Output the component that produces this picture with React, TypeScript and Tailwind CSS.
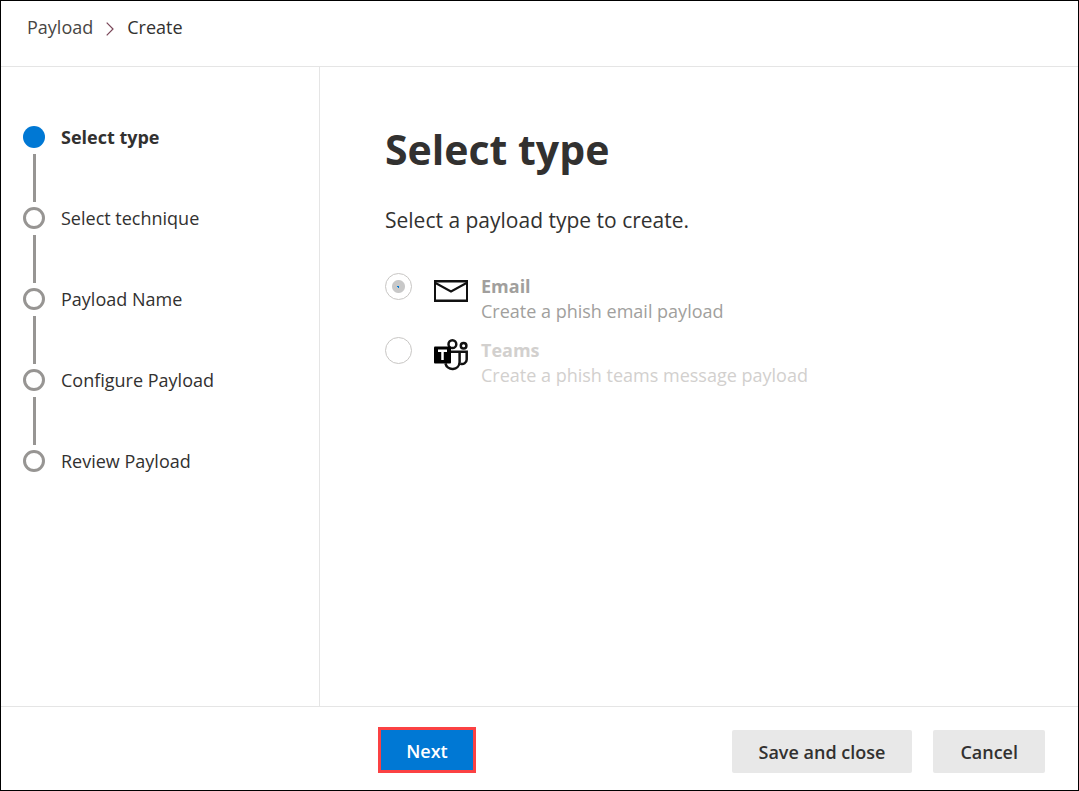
import React from 'react';

const steps = ['Select type', 'Select technique', 'Payload Name', 'Configure Payload', 'Review Payload'];

function MailIcon() {
  return (
    <svg viewBox="0 0 34 22" className="h-[22px] w-[34px]" fill="none" stroke="#111" aria-hidden="true">
      <rect x="1" y="1" width="32" height="20" strokeWidth="2" />
      <path d="M0 1.2h34M0 20.8h34" strokeWidth="2.4" />
      <path d="M1.5 3 17 11.5 32.5 3" strokeWidth="2" />
    </svg>
  );
}

function TeamsIcon() {
  return (
    <svg viewBox="0 0 34 32" className="h-8 w-[34px]" fill="none" stroke="#111" strokeWidth="2.5" aria-hidden="true">
      <circle cx="18.4" cy="5.2" r="3.9" />
      <circle cx="29.6" cy="6.8" r="2.8" />
      <path d="M16 12.8h16.7v7.6a4.6 4.6 0 0 1-6.4 4.2" />
      <path d="M25.6 12.8v10.4a7.2 7.2 0 0 1-14.2 1.2" />
      <rect x="0" y="7.4" width="17" height="17" rx="1" fill="#000" stroke="none" />
      <path d="M4 11.7h9M8.5 11.7v9.2" stroke="#fff" strokeWidth="2.5" />
    </svg>
  );
}

interface PayloadOptionProps {
  id: string;
  title: string;
  description: string;
  icon: React.ReactNode;
  tone: string;
  selected?: boolean;
}

function PayloadOption({ id, title, description, icon, tone, selected = false }: PayloadOptionProps) {
  return (
    <div className="flex items-start">
      <input
        type="radio"
        id={id}
        name="payload-type"
        disabled
        defaultChecked={selected}
        className="h-[27px] w-[27px] shrink-0 appearance-none rounded-full border border-[#c8c6c4] bg-white checked:bg-[radial-gradient(circle,#0078d4_0,#0078d4_1px,#c8c8c8_1px,#c8c8c8_6px,transparent_7px)]"
      />
      <label htmlFor={id} className={`ml-[22px] flex gap-[13px] pt-px text-lg leading-[25px] ${tone}`}>
        <span className="flex h-[34px] w-[34px] shrink-0 items-center">{icon}</span>
        <span>
          <span className="block font-bold">{title}</span>
          <span className="block">{description}</span>
        </span>
      </label>
    </div>
  );
}

export default function App() {
  return (
    <div className="flex min-h-screen flex-col border border-black bg-white font-['Open_Sans','Noto_Sans',sans-serif] text-lg text-[#323130]">
      <header className="border-b border-[#e5e5e5] px-[26px] pt-3 pb-[25px]">
        <nav aria-label="Breadcrumb" className="flex items-center gap-[13px] leading-7">
          <a href="#payload" className="text-[#484644]">Payload</a>
          <svg viewBox="0 0 8 14" className="mt-[3px] h-[14px] w-2" fill="none" stroke="#7a4658" strokeWidth="1.2" aria-hidden="true">
            <path d="m.7.7 6.3 6.3-6.3 6.3" />
          </svg>
          <a href="#create" aria-current="page">Create</a>
        </nav>
      </header>

      <div className="flex flex-1">
        <aside className="w-[319px] shrink-0 border-r border-[#e5e5e5] px-[22px] pt-[59px]">
          <ol>
            {steps.map((step, index) => (
              <li key={step} className="flex gap-4">
                <span className="flex w-[22px] shrink-0 flex-col items-center">
                  <span
                    className={
                      index === 0
                        ? 'h-[22px] w-[22px] rounded-full bg-[#0078d4]'
                        : 'h-[22px] w-[22px] rounded-full border-3 border-[#979593]'
                    }
                  />
                  {index < steps.length - 1 && <span className="mt-[6px] mb-[5px] h-12 w-[3px] bg-[#979593]" />}
                </span>
                <span className={index === 0 ? 'leading-[22px] font-bold' : 'leading-[22px]'}>{step}</span>
              </li>
            ))}
          </ol>
        </aside>

        <main className="flex-1 px-[65px] pt-[54px]">
          <h1 className="text-[41px] leading-[56px] font-bold">Select type</h1>
          <p className="mt-[29px] text-[21px] leading-7">Select a payload type to create.</p>
          <div role="radiogroup" aria-label="Payload type" className="mt-[39px] flex flex-col gap-[13px]">
            <PayloadOption
              id="email"
              title="Email"
              description="Create a phish email payload"
              icon={<MailIcon />}
              tone="text-[#a19f9d]"
              selected
            />
            <PayloadOption
              id="teams"
              title="Teams"
              description="Create a phish teams message payload"
              icon={<TeamsIcon />}
              tone="text-[#d2d0ce]"
            />
          </div>
        </main>
      </div>

      <footer className="flex items-end justify-between border-t border-[#e5e5e5] pt-5 pr-[33px] pb-[17px] pl-[377px] font-semibold">
        <button type="button" className="h-[46px] w-[98px] border-3 border-[#fb4143] bg-[#0078d4] pt-px text-white">
          Next
        </button>
        <div className="flex gap-[21px]">
          <button type="button" className="h-[43px] rounded-xs bg-[#e8e8e8] px-[27px]">Save and close</button>
          <button type="button" className="h-[43px] rounded-xs bg-[#e8e8e8] px-[27px]">Cancel</button>
        </div>
      </footer>
    </div>
  );
}
